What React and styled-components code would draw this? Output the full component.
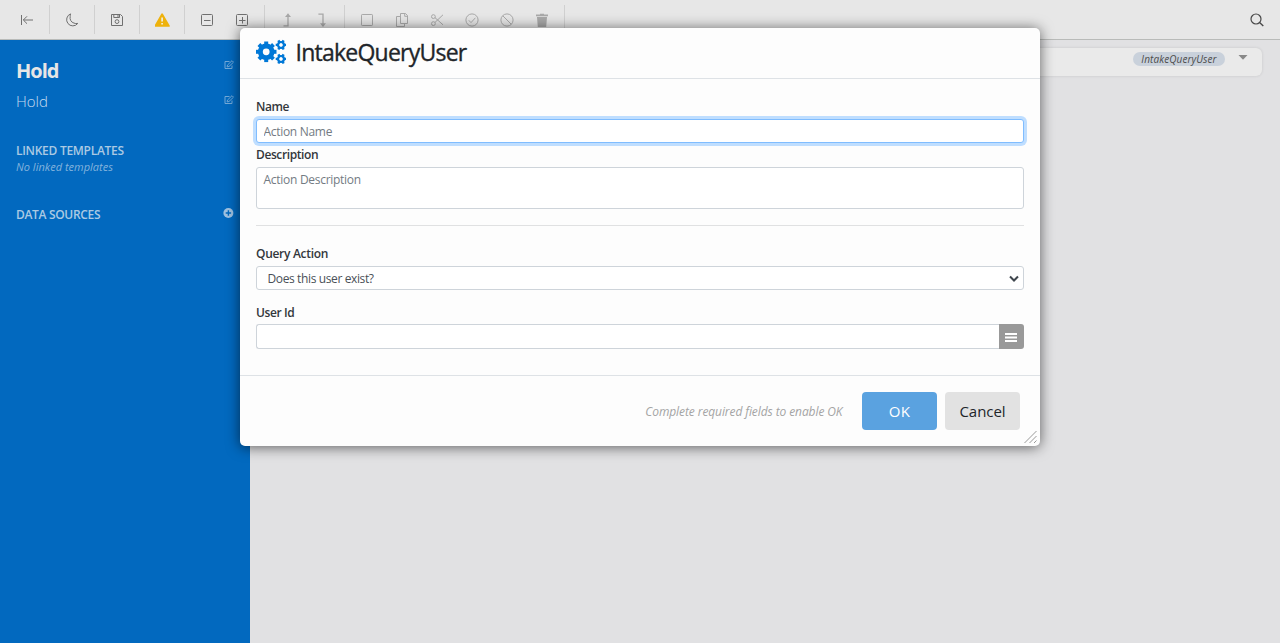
import React from "react";
import styled, { createGlobalStyle } from "styled-components";

const GlobalStyle = createGlobalStyle`
  * { box-sizing: border-box; }
  html, body { margin: 0; padding: 0; }
  body {
    font-family: "Open Sans", "Noto Sans", sans-serif;
    font-size: 12px;
    color: #212529;
    background: #e1e1e3;
    overflow: hidden;
  }
  svg { display: block; }
`;

const Page = styled.div`
  position: relative;
  display: flex;
  flex-direction: column;
  height: 100vh;
`;

const Toolbar = styled.header`
  display: flex;
  align-items: center;
  flex: none;
  height: 40px;
  padding: 0 5px;
  background: #e7e7e7;
  border-bottom: 1px solid #b9bbb9;
`;

const ToolGroup = styled.div`
  display: flex;
  height: 29px;
  padding: 0 4px 0 5px;
  border-right: 1px solid #d0d0d0;
`;

const ToolButton = styled.div`
  display: flex;
  align-items: center;
  justify-content: center;
  width: 35px;
  color: ${(p) => (p.$muted ? "#a9a9a9" : "#707070")};
`;

const SearchButton = styled(ToolButton)`
  margin-left: auto;
  color: #484848;
`;

const Body = styled.div`
  display: flex;
  flex: 1;
`;

const Sidebar = styled.aside`
  display: flex;
  flex-direction: column;
  width: 250px;
  padding: 14px 16px;
  background: #0269bf;
  color: #a9cbe8;
`;

const SideRow = styled.div`
  display: flex;
  align-items: flex-start;
  justify-content: space-between;
  height: ${(p) => p.$h}px;
  margin-top: ${(p) => p.$top || 0}px;
  svg { margin-top: ${(p) => p.$iconTop || 0}px; }
`;

const SideTitle = styled.h1`
  margin: 0;
  font-size: 20px;
  line-height: 33px;
  font-weight: 700;
  letter-spacing: -1px;
  color: #e6e6e6;
`;

const SideSubtitle = styled.div`
  font-size: 15px;
  line-height: 30px;
  font-weight: 300;
  letter-spacing: 0;
  color: #c6dcf0;
`;

const SideHeading = styled.h2`
  margin: 0;
  font-size: 12px;
  font-weight: 600;
  line-height: 18px;
  letter-spacing: ${(p) => p.$track}px;
  color: #abc9e3;
`;

const SideNote = styled.div`
  font-size: 11px;
  line-height: 14px;
  height: 16px;
  font-style: italic;
  letter-spacing: 0.02px;
  color: #83b3dd;
`;

const Canvas = styled.main`
  flex: 1;
  padding: 8px 18px 0 8px;
`;

const StepCard = styled.div`
  display: flex;
  justify-content: flex-end;
  align-items: flex-start;
  height: 28px;
  padding: 4px 14px 0 0;
  border-radius: 6px;
  background: #eaeaea;
  box-shadow: 0 0 3px rgba(0, 0, 0, 0.12);
`;

const Pill = styled.span`
  width: 92px;
  height: 14px;
  margin-right: 13px;
  border-radius: 7px;
  background: #c9d1db;
  color: #4c4c4c;
  font-size: 10px;
  line-height: 15px;
  font-style: italic;
  text-align: center;
  letter-spacing: 0.1px;
`;

const Dialog = styled.section`
  position: absolute;
  top: 28px;
  left: 240px;
  display: flex;
  flex-direction: column;
  width: 800px;
  height: 418px;
  border-radius: 5px;
  background: #fdfdfd;
  box-shadow: 0 1px 14px rgba(0, 0, 0, 0.6);
`;

const DialogHeader = styled.div`
  display: flex;
  align-items: center;
  gap: 9.5px;
  height: 51px;
  padding: 0 16px 2px;
  border-bottom: 1px solid #dee2e6;
`;

const DialogTitle = styled.h2`
  margin: 0;
  font-size: 23px;
  line-height: 34px;
  font-weight: 400;
  letter-spacing: -0.76px;
  -webkit-text-stroke: 0.35px currentColor;
`;

const DialogBody = styled.div`
  display: flex;
  flex-direction: column;
  flex: 1;
  padding: 19px 16px 0;
`;

const Label = styled.label`
  height: 18px;
  margin: ${(p) => p.$top || 0}px 0 ${(p) => p.$gap ?? 3}px;
  font-size: 12px;
  line-height: 18px;
  font-weight: 600;
  letter-spacing: ${(p) => p.$track}px;
  color: #33373b;
`;

const fieldBase = `
  width: 100%;
  margin: 0;
  border: 1px solid #ced4da;
  border-radius: 3px;
  background: #fff;
  font-family: inherit;
  font-size: 12px;
  color: #495057;
  outline: none;
  &::placeholder { color: #737b83; opacity: 1; }
`;

const TextInput = styled.input`
  ${fieldBase}
  height: ${(p) => p.$h || 24}px;
  padding: 1px 6.5px 0;
  letter-spacing: -0.3px;
  ${(p) => p.$focused && "border-color: #80bdff; box-shadow: 0 0 0 3px #bfdeff;"}
  ${(p) => p.$joined && "border-radius: 3px 0 0 3px; border-right: 0;"}
`;

const TextArea = styled.textarea`
  ${fieldBase}
  display: block;
  height: 42px;
  padding: 3px 6.5px;
  line-height: 18px;
  letter-spacing: -0.28px;
  resize: none;
`;

const Rule = styled.hr`
  width: 100%;
  height: 1px;
  margin: 16px 0 19px;
  border: 0;
  background: #e0e1e2;
`;

const SelectBox = styled.div`
  ${fieldBase}
  display: flex;
  align-items: center;
  justify-content: space-between;
  flex: none;
  height: 24px;
  padding: 1px 4px 0 10.5px;
  letter-spacing: -0.38px;
`;

const InputGroup = styled.div`
  display: flex;
`;

const MenuButton = styled.button`
  display: flex;
  align-items: center;
  justify-content: center;
  flex: none;
  width: 25px;
  height: 25px;
  padding: 2px 1px 0 0;
  border: 0;
  border-radius: 0 3px 3px 0;
  background: #999;
`;

const DialogFooter = styled.div`
  position: relative;
  display: flex;
  align-items: center;
  justify-content: flex-end;
  gap: 8px;
  height: 71px;
  padding: 0 20px 0 0;
  border-top: 1px solid #dee2e6;
`;

const Hint = styled.span`
  margin-right: 11.5px;
  padding-top: 1px;
  font-size: 12px;
  font-style: italic;
  letter-spacing: -0.09px;
  color: #a4a4a4;
`;

const Button = styled.button`
  width: 75px;
  height: 38px;
  margin-bottom: 1px;
  padding: 0;
  border: 0;
  border-radius: 4px;
  font-family: inherit;
  font-size: 15px;
  letter-spacing: ${(p) => (p.$primary ? 0.2 : -0.05)}px;
  background: ${(p) => (p.$primary ? "#5aa2e0" : "#e2e2e2")};
  color: ${(p) => (p.$primary ? "#fff" : "#212529")};
`;

const ResizeGrip = styled.div`
  position: absolute;
  right: 2px;
  bottom: 2px;
`;

const Glyph = ({ children, size = 15 }) => (
  <svg width={size} height={size} viewBox={`0 0 ${size} ${size}`} fill="none" stroke="currentColor" strokeWidth="1">
    {children}
  </svg>
);

const CollapseIcon = () => (
  <Glyph><path d="M1.5 3v10M3.5 8H13M7 4.3L3.3 8L7 11.7" /></Glyph>
);
const MoonIcon = () => (
  <Glyph><path d="M5.6 1.9A6.2 6.2 0 1 0 12.8 11.4Q10.6 11.9 9 11.1A5.4 5.4 0 0 1 5.2 4.6Q5.1 3.2 5.6 1.9Z" /></Glyph>
);
const SaveIcon = () => (
  <Glyph>
    <path d="M1.5 2.5H10.5L12.5 4.5V13.5H1.5Z M3.8 2.5V5.5H9.5V2.5M8 3V5" />
    <circle cx="7" cy="9.6" r="1.9" />
  </Glyph>
);
const WarningIcon = () => (
  <Glyph>
    <path d="M7.1 2.2L13.9 13.9H.4Z" fill="#eeb20c" stroke="#eeb20c" strokeWidth="1.8" strokeLinejoin="round" />
    <path d="M7.1 5.4V9.6M7.1 10.9v1.6" stroke="#f2f0ea" strokeWidth="1.6" />
  </Glyph>
);
const MinusBoxIcon = () => (
  <Glyph><rect x="1.5" y="2.5" width="11" height="11" rx="1" /><path d="M4 8.5H10.5" /></Glyph>
);
const PlusBoxIcon = () => (
  <Glyph><rect x="1.5" y="2.5" width="11" height="11" rx="1" /><path d="M4 8.5H10.5M7.5 5V11.5" /></Glyph>
);
const UpIcon = () => (
  <Glyph><path d="M3.5 13.8H8M8 14.4V2.5" strokeWidth="1.3" /><path d="M8 1.3L11 5H5Z" fill="currentColor" stroke="none" /></Glyph>
);
const DownIcon = () => (
  <Glyph><path d="M3.4 2.2H8M8 1.6V12" strokeWidth="1.3" /><path d="M8 14.9L11 11.2H5Z" fill="currentColor" stroke="none" /></Glyph>
);
const SquareIcon = () => (
  <Glyph><rect x="1.5" y="2.5" width="11" height="11" rx=".7" /></Glyph>
);
const CopyIcon = () => (
  <Glyph>
    <path d="M5.5 1.5H10.5L12.5 3.5V11.5H5.5ZM9.7 1.5V4.3H12.5M5.5 4.5H1.5V14.5H9.5V11.5" />
  </Glyph>
);
const CutIcon = () => (
  <Glyph>
    <circle cx="3.4" cy="4.6" r="1.9" /><circle cx="3.4" cy="11.6" r="1.9" />
    <path d="M5 5.7L13 12.8M5 10.4L13 2.8" />
  </Glyph>
);
const CheckIcon = () => (
  <Glyph><circle cx="7" cy="8" r="6.1" /><path d="M3.8 8.3L6 10.6L10.4 5.8" /></Glyph>
);
const BanIcon = () => (
  <Glyph><circle cx="7" cy="8" r="6.1" /><path d="M2.8 3.8L11.2 12.2" /></Glyph>
);
const TrashIcon = () => (
  <Glyph>
    <path d="M1 2.5H5V1.7H9V2.5H13V4.3H1ZM2 5H12L11.2 15H2.8Z" fill="currentColor" stroke="none" />
  </Glyph>
);
const SearchIcon = () => (
  <Glyph><circle cx="6" cy="7" r="5" strokeWidth="1.2" /><path d="M9.6 10.6L13.3 14.1" strokeWidth="1.4" /></Glyph>
);

const EditIcon = () => (
  <svg width="10" height="10" viewBox="0 0 10 10" fill="none" stroke="#73a9d8" strokeWidth="1">
    <path d="M5.5 1.5H1V8.5H8V5.5" />
    <path d="M3.1 6.9L3.5 5L8 .7L9.5 2.2L5 6.5Z" />
  </svg>
);
const AddIcon = () => (
  <svg width="11" height="10" viewBox="0 0 11 10">
    <circle cx="5.4" cy="5" r="5" fill="#9fc1e0" />
    <path d="M2.7 5H8.1M5.4 2.3V7.7" stroke="#0269bf" strokeWidth="1.4" />
  </svg>
);

const Gear = ({ cx, cy, inner, outer, hole, teeth, toothWidth }) => (
  <g transform={`translate(${cx} ${cy})`} stroke="#0078d7" fill="none">
    <circle r={(inner + hole) / 2} strokeWidth={inner - hole} />
    {Array.from({ length: teeth }, (_, i) => (
      <path key={i} d={`M${hole + 0.8} 0H${outer}`} strokeWidth={toothWidth} transform={`rotate(${(i * 360) / teeth})`} />
    ))}
  </g>
);

const CogsIcon = () => (
  <svg width="30" height="26" viewBox="0 0 30 26">
    <Gear cx={10.2} cy={12.8} inner={8.3} outer={10.3} hole={3.4} teeth={8} toothWidth={4} />
    <Gear cx={25} cy={5.9} inner={4} outer={5.3} hole={1.8} teeth={6} toothWidth={2.4} />
    <Gear cx={25} cy={19.9} inner={4} outer={5.3} hole={1.8} teeth={6} toothWidth={2.4} />
  </svg>
);

const toolGroups = [
  { icons: [CollapseIcon] },
  { icons: [MoonIcon] },
  { icons: [SaveIcon] },
  { icons: [WarningIcon] },
  { icons: [MinusBoxIcon, PlusBoxIcon] },
  { icons: [UpIcon, DownIcon], muted: true },
  { icons: [SquareIcon, CopyIcon, CutIcon, CheckIcon, BanIcon, TrashIcon], muted: true },
];

export default function App() {
  return (
    <Page>
      <GlobalStyle />
      <Toolbar>
        {toolGroups.map((group, g) => (
          <ToolGroup key={g}>
            {group.icons.map((Icon, i) => (
              <ToolButton key={i} $muted={group.muted}><Icon /></ToolButton>
            ))}
          </ToolGroup>
        ))}
        <SearchButton><SearchIcon /></SearchButton>
      </Toolbar>
      <Body>
        <Sidebar>
          <SideRow $h={32} $iconTop={6}><SideTitle>Hold</SideTitle><EditIcon /></SideRow>
          <SideRow $h={30} $iconTop={9}><SideSubtitle>Hold</SideSubtitle><EditIcon /></SideRow>
          <SideRow $h={18} $top={26}><SideHeading $track={-0.28}>LINKED TEMPLATES</SideHeading></SideRow>
          <SideNote>No linked templates</SideNote>
          <SideRow $h={18} $top={30} $iconTop={2}><SideHeading $track={-0.32}>DATA SOURCES</SideHeading><AddIcon /></SideRow>
        </Sidebar>
        <Canvas>
          <StepCard>
            <Pill>IntakeQueryUser</Pill>
            <svg width="10" height="11" viewBox="0 0 10 11"><path d="M.5 3H9.5L5 7.8Z" fill="#888" /></svg>
          </StepCard>
        </Canvas>
      </Body>
      <Dialog>
        <DialogHeader>
          <CogsIcon />
          <DialogTitle>IntakeQueryUser</DialogTitle>
        </DialogHeader>
        <DialogBody>
          <Label $track={-0.45}>Name</Label>
          <TextInput $focused placeholder="Action Name" />
          <Label $top={3} $track={-0.4}>Description</Label>
          <TextArea placeholder="Action Description" />
          <Rule />
          <Label $track={-0.3}>Query Action</Label>
          <SelectBox>
            Does this user exist?
            <svg width="10" height="8" viewBox="0 0 10 8" fill="none" stroke="#3f464d" strokeWidth="2"><path d="M1 1.5L5 5.5L9 1.5" /></svg>
          </SelectBox>
          <Label $top={14} $gap={2} $track={-0.4}>User Id</Label>
          <InputGroup>
            <TextInput $h={25} $joined />
            <MenuButton>
              <svg width="12" height="9" viewBox="0 0 12 9" stroke="#fff" strokeWidth="2"><path d="M0 1H12M0 4.5H12M0 8H12" /></svg>
            </MenuButton>
          </InputGroup>
        </DialogBody>
        <DialogFooter>
          <Hint>Complete required fields to enable OK</Hint>
          <Button $primary>OK</Button>
          <Button>Cancel</Button>
          <ResizeGrip>
            <svg width="14" height="14" viewBox="0 0 14 14" stroke="#999" strokeWidth="1" fill="none">
              <path d="M.5 13L12.5 1M5.5 13L12.5 6M10 13L12.5 10.5" />
            </svg>
          </ResizeGrip>
        </DialogFooter>
      </Dialog>
    </Page>
  );
}
